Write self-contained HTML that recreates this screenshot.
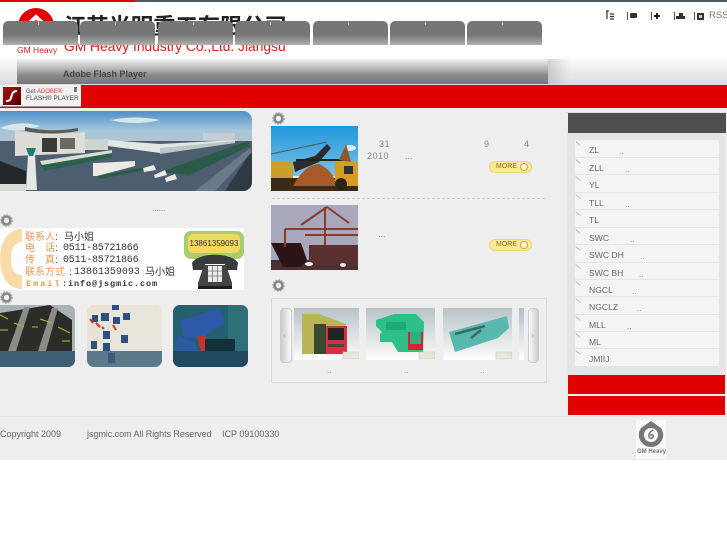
<!DOCTYPE html>
<html><head><meta charset="utf-8"><style>
html,body{margin:0;padding:0;background:#fff}
#p{position:relative;width:727px;height:545px;overflow:hidden;background:#fff;font-family:"Liberation Sans","Noto Sans CJK SC",sans-serif;font-size:9px;color:#666}
#p div,#p span,#p svg{position:absolute}
.tab{top:21px;width:75px;height:24px;border-radius:5px 5px 0 0;background:linear-gradient(#767676 0,#777 60%,#b0b0b0 100%)}
.tab i{position:absolute;left:35px;top:1px;width:1px;height:3px;background:#ccc}
.gear{width:13px;height:13px}
.li{left:575px;width:144px;height:17px;background:#f4f4f4;border-bottom:1px solid #e4e4e4}
.li span{left:14px;top:4px;font-size:8.6px;line-height:12px;color:#666;white-space:pre}
.li u{position:absolute;top:6px;font-size:8px;line-height:12px;color:#888;text-decoration:none}
.li b{position:absolute;left:0;top:3px;width:6px;height:1px;background:#bbb;transform:rotate(40deg)}
.more{left:489px;width:41px;height:10px;border:1px solid #f0d27a;border-radius:6px;background:#fbe99a;font-size:7px;line-height:10px;color:#8a6a10;text-indent:6px}
.more i{position:absolute;left:30px;top:1px;width:6px;height:6px;border:1px solid #c9a040;border-radius:50%;background:#fff8d8}
.t{white-space:pre;line-height:12px}
.c{font-size:10px;line-height:12px;white-space:pre;color:#333}
.o{color:#ee9955}
</style></head><body><div id="p">
<div style="left:0;top:0;width:135px;height:2px;background:#e00000"></div>
<div style="left:135px;top:0;width:592px;height:2px;background:#505a62"></div>

<!-- header -->
<svg style="left:17px;top:7px" width="38" height="38" viewBox="0 0 38 38"><circle cx="19" cy="19" r="18" fill="#e00000"/><path d="M7 21L19 10L31 21" stroke="#fff" stroke-width="4" fill="none"/></svg>
<div class="t" style="left:17px;top:44px;font-size:8.500px;color:#e02020;line-height:12px">GM Heavy</div>
<div class="t" style="left:64px;top:13px;font-size:22.300px;line-height:28px;color:#222;font-weight:bold">江苏光明重工有限公司</div>
<div class="t" style="left:64px;top:39px;font-size:13.800px;line-height:16px;color:#e81818">GM Heavy Industry Co.,Ltd. Jiangsu</div>
<div class="tab" style="left:3px"><i></i></div>
<div class="tab" style="left:80px"><i></i></div>
<div class="tab" style="left:158px"><i></i></div>
<div class="tab" style="left:235px"><i></i></div>
<div class="tab" style="left:313px"><i></i></div>
<div class="tab" style="left:390px"><i></i></div>
<div class="tab" style="left:467px"><i></i></div>

<!-- top right icons -->
<svg style="left:604px;top:10px" width="100" height="12" viewBox="0 0 100 12"><path d="M2 1h3M3 1v8M6 4h4M6 6.500h4M6 9h4" stroke="#333" stroke-width="1.200" fill="none"/><path d="M23.500 2v8M47.500 2v8M70.500 2v8M90.500 2v8" stroke="#555" stroke-width="1"/><rect x="26" y="3" width="7" height="5" rx="1" fill="#333"/><path d="M50 6h6M53 3v6" stroke="#222" stroke-width="2"/><path d="M72 9h9V6h-2V3h-4v3h-3z" fill="#333"/><rect x="93" y="3" width="7" height="7" fill="#333"/><rect x="95" y="5" width="3" height="3" fill="#ccc"/></svg>
<div class="t" style="left:709px;top:10px;font-size:9.500px;color:#777">RSS</div>

<!-- gradient band -->
<div style="left:0;top:55px;width:727px;height:30px;background:linear-gradient(#fff,#dcdcdc)"></div>
<div style="left:17px;top:59px;width:531px;height:25px;background:linear-gradient(#f0f0f0 0,#bdbdbd 35%,#8a8a8a 65%,#777 100%)"></div>
<div style="left:548px;top:59px;width:22px;height:25px;background:linear-gradient(90deg,#9a9a9a66,#0000)"></div>
<div class="t" style="left:63px;top:68px;font-size:9px;font-weight:bold;color:#444">Adobe Flash Player</div>

<!-- red bar -->
<div style="left:0;top:85px;width:727px;height:23px;background:#e00000"></div>
<div style="left:0;top:85px;width:81px;height:22px;background:#f2f2f2;border-bottom:1px solid #999;box-sizing:border-box"></div>
<div style="left:3px;top:87px;width:18px;height:18px;background:linear-gradient(135deg,#b01010,#500)"></div>
<svg style="left:3px;top:87px" width="18" height="18" viewBox="0 0 18 18"><path d="M14 4C9 4 9 8 8 11C7 14 5 14 3 14" stroke="#fff" stroke-width="2" fill="none"/></svg>
<div class="t" style="left:26px;top:88px;font-size:6px;line-height:8px;color:#555">Get <span style="position:static;color:#d33">ADOBE®</span></div>
<div class="t" style="left:26px;top:95px;font-size:6.500px;line-height:8px;color:#444">FLASH® PLAYER</div>
<div style="left:74px;top:87px;width:3px;height:5px;background:#777"></div>

<!-- main bg -->
<div style="left:0;top:108px;width:727px;height:352px;background:#eeeeee"></div>
<div style="left:0;top:416px;width:727px;height:1px;background:#e4e4e4"></div>

<!-- factory banner -->
<div style="left:0;top:111px;width:252px;height:80px;border-radius:0 9px 9px 0;overflow:hidden">
<svg width="252" height="80" viewBox="0 111 252 80" style="left:0;top:0">
<defs><linearGradient id="sky" x1="0" y1="0" x2="0" y2="1"><stop offset="0" stop-color="#4e8fc8"/><stop offset=".6" stop-color="#a5c6dc"/><stop offset="1" stop-color="#b5c4cc"/></linearGradient></defs>
<rect x="0" y="111" width="252" height="32" fill="url(#sky)"/>
<path d="M110 120q25-5 50 0q-25 6-50 0zM0 128q20-8 40-2q-20 8-40 2z" fill="#d8e6ee"/>
<rect x="203" y="133" width="32" height="7" fill="#c8ccd4"/>
<path d="M0 141H252V191H0Z" fill="#4d5e70"/>
<path d="M225 191L252 150V191Z" fill="#2f3944"/>
<path d="M195 191L250 148L252 152L215 191Z" fill="#6a7a88"/>
<path d="M108 140L160 144L235 140V143L160 153L108 146Z" fill="#e2e6e4"/>
<path d="M160 148L160 154L235 143V141Z" fill="#bcc6c6"/>
<path d="M160 172L248 141L250 146L190 175Z" fill="#2a5a48"/>
<path d="M40 165L112 153V157L45 171Z" fill="#2c6048"/>
<path d="M40 161L112 150V153L42 165Z" fill="#d8dcd8"/>
<path d="M15 131Q50 136 85 132V153L15 156Z" fill="#dedcd6"/>
<path d="M25 127Q50 133 78 128V131Q50 136 25 131Z" fill="#5e5a50"/>
<path d="M42 138H57V152H42Z" fill="#3a3a38"/><path d="M60 138H75V149H60Z" fill="#6a6a60"/>
<path d="M85 139H108V150H85Z" fill="#d0d4d0"/>
<path d="M93 163H97L135 161V166L97 176H93Z" fill="#eceae4"/>
<path d="M97 176L145 167V170L100 179Z" fill="#2c5a48"/>
<path d="M0 161L26 171V188H0Z" fill="#24272a"/><path d="M0 184H26V191H0Z" fill="#d8dcd8"/>
<path d="M28 155H35L37 190H26Z" fill="#e4e8e4"/><path d="M26 148H36L33 156H29Z" fill="#1f7a70"/>
<path d="M143 168l11-3 2 5-12 2zM154 175l11-5 2 5-12 3zM165 178l10-4 2 5-11 3z" fill="#ebebe6"/>
</svg></div>
<div class="t" style="left:152px;top:203px;font-size:8px;color:#777">......</div>

<!-- gears -->
<svg width="0" height="0" style="left:0;top:0"><defs><g id="g"><circle cx="6.500" cy="6.500" r="4" fill="none" stroke="#888" stroke-width="2.600"/><circle cx="6.500" cy="6.500" r="5.800" fill="none" stroke="#aaa" stroke-width="1.200" stroke-dasharray="1.500 1.500"/></g></defs></svg>
<svg class="gear" style="left:0;top:214px"><use href="#g"/></svg>
<svg class="gear" style="left:0;top:291px"><use href="#g"/></svg>
<svg class="gear" style="left:272px;top:112px"><use href="#g"/></svg>
<svg class="gear" style="left:272px;top:279px"><use href="#g"/></svg>

<!-- contact -->
<div style="left:0;top:228px;width:244px;height:62px;background:#fff"></div>
<svg style="left:0;top:228px" width="24" height="62" viewBox="0 0 24 62"><path d="M22 1C8 1 0 14 0 31S8 61 22 61V47C14 47 11 40 11 31S14 14 22 14Z" fill="#f8dca8"/></svg>
<div class="c o" style="left:25px;top:232px">联系人</div><div class="c" style="left:55px;top:232px">:</div><div class="c" style="left:64px;top:232px">马小姐</div>
<div class="c o" style="left:25px;top:243px">电</div><div class="c o" style="left:45px;top:243px">话</div><div class="c" style="left:55px;top:243px">:</div><div class="c" style="left:63px;top:243px;font-family:'Liberation Mono',monospace;letter-spacing:-.2px">0511-85721866</div>
<div class="c o" style="left:25px;top:255px">传</div><div class="c o" style="left:45px;top:255px">真</div><div class="c" style="left:55px;top:255px">:</div><div class="c" style="left:63px;top:255px;font-family:'Liberation Mono',monospace;letter-spacing:-.2px">0511-85721866</div>
<div class="c o" style="left:25px;top:267px">联系方式</div><div class="c" style="left:69px;top:267px">:</div><div class="c" style="left:74px;top:267px;font-family:'Liberation Mono',monospace;letter-spacing:-.02px">13861359093</div><div class="c" style="left:145px;top:267px">马小姐</div>
<div class="c o" style="left:26px;top:278px;font-size:8.500px;font-family:'Liberation Mono',monospace;font-weight:bold;letter-spacing:2px">Email</div><div class="c" style="left:62px;top:278px;font-size:8.500px;font-family:'Liberation Mono',monospace;font-weight:bold;letter-spacing:.9px">:info@jsgmic.com</div>
<div style="left:184px;top:231px;width:60px;height:28px;border-radius:7px;background:#a8cc70"></div>
<div class="t" style="left:188px;top:234px;width:52px;height:19px;border-radius:5px;background:#f3d860;font-size:8px;line-height:19px;text-align:center;color:#333">13861359093</div>
<svg style="left:190px;top:250px" width="50" height="41" viewBox="0 0 50 41"><path d="M2 13C8 2 42 2 48 13L47 20H36L35 14H15L14 20H3Z" fill="#3a3a3a"/><path d="M14 15H36L42 33V39H8V33Z" fill="#444"/><rect x="18" y="16" width="14" height="16" fill="#e8ece8"/><path d="M22.500 16v16M27.500 16v16M18 21h14M18 26h14" stroke="#777" stroke-width=".8"/><rect x="8" y="36" width="34" height="3" fill="#1c1c1c"/></svg>

<!-- product thumbs -->
<div style="left:0;top:305px;width:75px;height:62px;border-radius:0 7px 7px 0;overflow:hidden;background:#98a8a8">
<svg width="75" height="62" viewBox="0 0 75 62" style="left:0;top:0">
<rect width="75" height="62" fill="#a8b4b4"/>
<path d="M0 8L50 0L72 15V46H0Z" fill="#2c2c28"/>
<path d="M8 46L24 2H30L16 46ZM38 46L52 3H58L46 46Z" fill="#8c8c84"/>
<path d="M0 10L8 14M14 18L24 22M40 14L52 18M58 22L70 28" stroke="#b8b840" stroke-width="1"/>
<path d="M0 25H8M32 22H38M62 36H70" stroke="#b8b840" stroke-width="1"/>
<rect y="46" width="75" height="16" fill="#3f5f74"/></svg></div>
<div style="left:87px;top:305px;width:75px;height:62px;border-radius:7px;overflow:hidden">
<svg width="75" height="62" viewBox="0 0 75 62" style="left:0;top:0">
<rect width="75" height="62" fill="#e8e6da"/>
<path d="M0 0H28Q10 20 8 62H0Z" fill="#e8e2d4"/>
<g fill="#2f4f80"><rect x="5" y="10" width="6" height="7"/><rect x="14" y="8" width="8" height="8"/><rect x="25" y="0" width="7" height="5"/><rect x="26" y="12" width="7" height="7"/><rect x="36" y="8" width="7" height="7"/><rect x="16" y="26" width="7" height="8"/><rect x="34" y="30" width="7" height="8"/><rect x="4" y="36" width="6" height="8"/><rect x="16" y="38" width="7" height="8"/></g>
<path d="M3 14l3 4M9 18l4 4M15 22l2 2M26 20l3 5" stroke="#d83030" stroke-width="2"/>
<rect y="46" width="75" height="16" fill="#5a7a8a"/><rect x="21" y="48" width="7" height="10" fill="#3a5a80"/></svg></div>
<div style="left:173px;top:305px;width:75px;height:62px;border-radius:7px;overflow:hidden">
<svg width="75" height="62" viewBox="0 0 75 62" style="left:0;top:0">
<rect width="75" height="62" fill="#24606e"/>
<path d="M55 0H75V46H55Z" fill="#2f7078"/>
<path d="M7 16L46 3L52 18L30 32L12 34Z" fill="#2c5aa8"/>
<path d="M4 30L20 36L26 46H2Z" fill="#2c5ca0"/>
<path d="M24 32L32 30L36 46H28Z" fill="#c83030"/>
<path d="M32 34H62V46H32Z" fill="#12303a"/>
<rect y="46" width="75" height="16" fill="#1f4a60"/></svg></div>

<!-- news -->
<div style="left:271px;top:126px;width:87px;height:65px;overflow:hidden">
<svg width="87" height="65" viewBox="0 0 87 65" style="left:0;top:0">
<defs><linearGradient id="s2" x1="0" y1="0" x2="0" y2="1"><stop offset="0" stop-color="#1f98dc"/><stop offset="1" stop-color="#7cc0e6"/></linearGradient></defs>
<rect width="87" height="50" fill="url(#s2)"/>
<ellipse cx="79" cy="22" rx="6" ry="3" fill="#d8ecf4"/>
<path d="M0 36H22V52H0Z" fill="#c8a028"/>
<path d="M0 52H87V65H0Z" fill="#3a2a18"/>
<path d="M22 60Q34 38 48 38Q62 44 66 60Z" fill="#a85a2a"/>
<path d="M0 28L56 16" stroke="#555" stroke-width="1"/>
<path d="M22 36L44 30L56 18L60 22L48 36L24 46Z" fill="#2c2c2c"/>
<path d="M25 34L74 34" stroke="#222" stroke-width="2"/>
<path d="M68 34L75 18L80 36Z" fill="#8a5a2a"/>
<path d="M64 36H87V60H64Z" fill="#d89c20"/><circle cx="70" cy="58" r="6" fill="#2a2418"/>
<rect x="73" y="40" width="9" height="8" fill="#333"/>
</svg></div>
<div class="t" style="left:379px;top:138px;font-size:9px;color:#888;letter-spacing:.5px">31</div>
<div class="t" style="left:484px;top:138px;font-size:9px;color:#888">9</div>
<div class="t" style="left:524px;top:138px;font-size:9px;color:#888">4</div>
<div class="t" style="left:367px;top:150px;font-size:9px;color:#888;letter-spacing:.5px">2010</div>
<div class="t" style="left:405px;top:150px;font-size:9px;color:#888">...</div>
<div class="more" style="top:161px">MORE<i></i></div>
<div style="left:272px;top:198px;width:273px;border-top:1px dashed #ccc"></div>
<div style="left:271px;top:205px;width:87px;height:65px;overflow:hidden">
<svg width="87" height="65" viewBox="0 0 87 65" style="left:0;top:0">
<rect width="87" height="65" fill="#a8a8bc"/>
<path d="M0 55H87V65H0Z" fill="#4a3030"/>
<path d="M0 38H30L36 55L30 62H12L2 42Z" fill="#2a1418"/>
<path d="M38 40H87V60H38Z" fill="#5a3030"/>
<path d="M14 24H87M14 24V42M54 2V40M56 2L30 20M56 2L78 18M34 30H87" stroke="#8a3a30" stroke-width="2" fill="none"/>
<ellipse cx="38" cy="59" rx="4" ry="2" fill="#eee"/><ellipse cx="72" cy="60" rx="3" ry="2" fill="#eee"/>
</svg></div>
<div class="t" style="left:378px;top:228px;font-size:9px;color:#888">...</div>
<div class="more" style="top:239px">MORE<i></i></div>

<!-- carousel -->
<div style="left:271px;top:298px;width:274px;height:83px;border:1px solid #d8d8d8"></div>
<div style="left:280px;top:308px;width:10px;height:53px;border:1px solid #ccc;border-radius:4px;background:linear-gradient(90deg,#ccc,#fafafa)"></div>
<div class="t" style="left:283px;top:329px;font-size:9px;color:#aaa">‹</div>
<div style="left:528px;top:308px;width:9px;height:53px;border:1px solid #ccc;border-radius:4px;background:linear-gradient(90deg,#fafafa,#ccc)"></div>
<div class="t" style="left:531px;top:329px;font-size:9px;color:#aaa">›</div>
<div style="left:294px;top:308px;width:65px;height:52px;overflow:hidden;background:linear-gradient(#b8c4c8,#e8eaea 70%,#fff)">
<svg width="65" height="52" viewBox="0 0 65 52" style="left:0;top:0">
<path d="M8 6H25L52 16V20H53V46H8Z" fill="#b8b458"/>
<path d="M20 16H32V46H20Z" fill="#3a4a30"/>
<path d="M32 18H53V46H32Z" fill="#d83040"/><path d="M34 20H50V32H34Z" fill="#222"/><path d="M34 36H50V39H34Z" fill="#444"/>
<rect x="49" y="44" width="16" height="7" fill="#e8e8d8" stroke="#bbb" stroke-width=".5"/></svg></div>
<div style="left:366px;top:308px;width:69px;height:52px;overflow:hidden;background:linear-gradient(#b8c4c8,#e8eaea 70%,#fff)">
<svg width="69" height="52" viewBox="0 0 69 52" style="left:0;top:0">
<path d="M10 12L28 6H50L58 14L57 44H32L26 34H14V26L16 24L10 18Z" fill="#2cc088"/>
<path d="M20 14h20v8H20z" fill="#22a878"/>
<path d="M42 24H57V42H42Z" fill="#e02030"/><path d="M44 24H55V36H44Z" fill="#2cb080"/>
<rect x="53" y="44" width="16" height="7" fill="#e8e8d8" stroke="#bbb" stroke-width=".5"/></svg></div>
<div style="left:443px;top:308px;width:69px;height:52px;overflow:hidden;background:linear-gradient(#b8c4c8,#e8eaea 70%,#fff)">
<svg width="69" height="52" viewBox="0 0 69 52" style="left:0;top:0">
<path d="M6 24L50 12L64 8L66 20L55 30L12 44Z" fill="#58b8b0"/>
<path d="M12 26l30-8M28 30l10-8" stroke="#3a6a68" stroke-width="2.500"/>
<rect x="53" y="44" width="16" height="7" fill="#e8e8d8" stroke="#bbb" stroke-width=".5"/></svg></div>
<div style="left:519px;top:308px;width:5px;height:52px;background:linear-gradient(#b0c0cc,#fff)"></div>
<div class="t" style="left:327px;top:365px;font-size:8px;color:#888">..</div>
<div class="t" style="left:404px;top:365px;font-size:8px;color:#888">..</div>
<div class="t" style="left:480px;top:365px;font-size:8px;color:#888">..</div>

<!-- right col -->
<div style="left:567px;top:133px;width:158px;height:242px;background:#e4e4e4"></div>
<div style="left:568px;top:113px;width:158px;height:20px;background:#4f4f4f"></div>
<div style="left:566px;top:112px;width:161px;height:1px;background:#e0e0e0"></div>
<div class="li" style="top:140px"><b></b><span>ZL</span><u style="left:44px">..</u></div>
<div class="li" style="top:158px;height:16px"><b></b><span>ZLL</span><u style="left:50px">..</u></div>
<div class="li" style="top:175px"><b></b><span>YL</span></div>
<div class="li" style="top:193px;height:16px"><b></b><span>TLL</span><u style="left:50px">..</u></div>
<div class="li" style="top:210px"><b></b><span>TL</span></div>
<div class="li" style="top:228px;height:16px"><b></b><span>SWC</span><u style="left:55px">..</u></div>
<div class="li" style="top:245px"><b></b><span>SWC DH</span><u style="left:65px">..</u></div>
<div class="li" style="top:263px;height:16px"><b></b><span>SWC BH</span><u style="left:64px">..</u></div>
<div class="li" style="top:280px;height:16px"><b></b><span>NGCL</span><u style="left:57px">..</u></div>
<div class="li" style="top:297px"><b></b><span>NGCLZ</span><u style="left:62px">..</u></div>
<div class="li" style="top:315px;height:16px"><b></b><span>MLL</span><u style="left:52px">..</u></div>
<div class="li" style="top:332px;height:16px"><b></b><span>ML</span></div>
<div class="li" style="top:349px;border:0"><b></b><span>JMIIJ</span></div>
<div style="left:568px;top:375px;width:157px;height:19px;background:#e00000"></div>
<div style="left:568px;top:396px;width:157px;height:19px;background:#e00000"></div>

<!-- footer -->
<div class="t" style="left:0;top:428px;font-size:9px;color:#666">Copyright 2009</div>
<div class="t" style="left:87px;top:428px;font-size:9px;color:#666;letter-spacing:-.05px">jsgmic.com All Rights Reserved</div>
<div class="t" style="left:222px;top:428px;font-size:9px;color:#666">ICP 09100330</div>
<div style="left:636px;top:420px;width:30px;height:39px;background:#f8f8f8"></div>
<svg style="left:636px;top:420px" width="30" height="28" viewBox="0 0 30 28"><path d="M15 1L25 8Q29 14 26 20Q22 27 15 27Q8 27 4 20Q1 14 5 8Z" fill="#777"/><circle cx="15" cy="15" r="7" fill="#f8f8f8"/><path d="M17 10Q12 13 13 17Q15 20 17 17Q18 14 14 15" stroke="#777" stroke-width="1.500" fill="none"/></svg>
<div class="t" style="left:637px;top:447px;font-size:6px;line-height:10px;font-weight:bold;color:#777">GM Heavy</div>
</div></body></html>
